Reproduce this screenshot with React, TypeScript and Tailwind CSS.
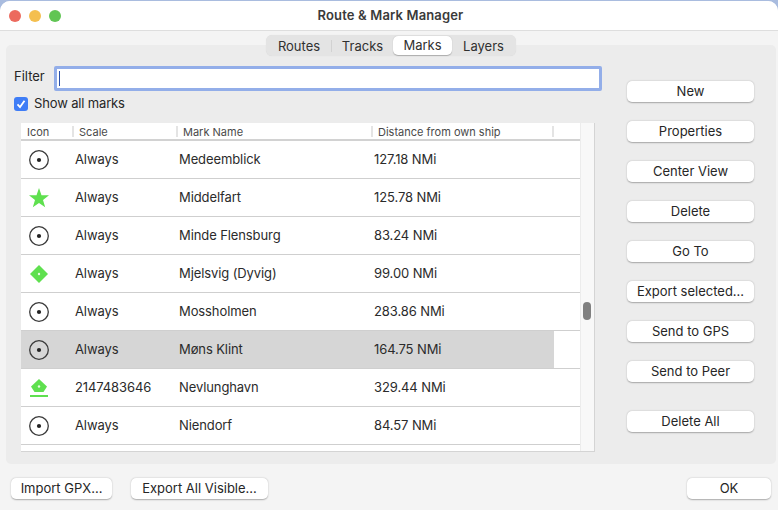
const marks = [
  { icon: "circle", scale: "Always", name: "Medeemblick", distance: "127.18 NMi" },
  { icon: "star", scale: "Always", name: "Middelfart", distance: "125.78 NMi" },
  { icon: "circle", scale: "Always", name: "Minde Flensburg", distance: "83.24 NMi" },
  { icon: "diamond", scale: "Always", name: "Mjelsvig (Dyvig)", distance: "99.00 NMi" },
  { icon: "circle", scale: "Always", name: "Mossholmen", distance: "283.86 NMi" },
  { icon: "circle", scale: "Always", name: "Møns Klint", distance: "164.75 NMi", selected: true },
  { icon: "house", scale: "2147483646", name: "Nevlunghavn", distance: "329.44 NMi" },
  { icon: "circle", scale: "Always", name: "Niendorf", distance: "84.57 NMi" },
];

const sideButtons = [
  { label: "New", className: "mb-[19px]" },
  { label: "Properties", className: "mb-[19px]" },
  { label: "Center View", className: "mb-[19px]" },
  { label: "Delete", className: "mb-[19px]" },
  { label: "Go To", className: "mb-[19px]" },
  { label: "Export selected...", className: "mb-[19px]" },
  { label: "Send to GPS", className: "mb-[19px]" },
  { label: "Send to Peer", className: "mb-[29px]" },
  { label: "Delete All", className: "" },
];

function MarkIcon({ type }: { type: string }) {
  if (type === "star") {
    return (
      <svg width="22" height="22" viewBox="0 0 22 22">
        <path d="M11 1 L13.5 8.2 L21 8.3 L15 12.9 L17.2 20.3 L11 15.9 L4.8 20.3 L7 12.9 L1 8.3 L8.5 8.2 Z" fill="#5fe04f" />
      </svg>
    );
  }
  if (type === "diamond") {
    return (
      <svg width="22" height="22" viewBox="0 0 22 22">
        <path d="M11 2 L20 11 L11 20 L2 11 Z" fill="#5fe04f" />
        <circle cx="11" cy="11" r="1.2" fill="#e8fbe4" />
      </svg>
    );
  }
  if (type === "house") {
    return (
      <svg width="22" height="22" viewBox="0 0 22 22">
        <path d="M11 2 L19 9.5 L15.5 15 L6.5 15 L3 9.5 Z" fill="#5fe04f" />
        <circle cx="11" cy="9.5" r="1.2" fill="#e8fbe4" />
        <rect x="2" y="18" width="18" height="2" fill="#5fe04f" />
      </svg>
    );
  }
  return (
    <svg width="22" height="22" viewBox="0 0 22 22">
      <circle cx="11" cy="11" r="9.3" fill="none" stroke="#3a3a3a" strokeWidth="1.3" />
      <circle cx="11" cy="11" r="2.1" fill="#222222" />
    </svg>
  );
}

function Button({ label, className }: { label: string; className: string }) {
  return (
    <button className={`h-[21px] bg-white rounded-[5px] shadow-[0_0.5px_1.5px_rgba(0,0,0,0.3)] text-[13px] leading-[21px] text-[#262626] ${className}`}>
      {label}
    </button>
  );
}

function HeaderCell({ label, className }: { label: string; className: string }) {
  return (
    <div className={`${className} flex items-center h-[11px] pl-[5px] pt-[2px] border-r-2 border-[#e4e4e4] text-[11px] text-[#4a4a4a]`}>
      {label}
    </div>
  );
}

export default function App() {
  return (
    <div className="w-[778px] h-[510px] overflow-hidden bg-[#a9bcdf] font-['Inter','Liberation_Sans',sans-serif]">
      <div className="w-[778px] h-[510px] mt-px rounded-t-[10px] bg-[#f4f4f4] flex flex-col overflow-hidden">
        {/* title bar */}
        <div className="h-[30px] shrink-0 bg-white border-b border-[#dedede] flex items-center pl-[9px] relative">
          <div className="flex gap-2">
            <div className="w-3 h-3 rounded-full bg-[#ec6a5e]" />
            <div className="w-3 h-3 rounded-full bg-[#f4bf4f]" />
            <div className="w-3 h-3 rounded-full bg-[#61c554]" />
          </div>
          <div className="absolute inset-0 pl-[3px] flex items-center justify-center text-[13px] font-semibold text-[#3a3a3a] tracking-[0.15px]">
            Route &amp; Mark Manager
          </div>
        </div>

        {/* tabbed panel */}
        <div className="relative mt-[14px] mx-[6px] mr-[2px] h-[419px] bg-[#ececec] rounded-[5px] flex pl-[8px] pt-[21px]">
          <div className="absolute -top-[10px] left-[260px] h-[21px] bg-[#e4e4e4] rounded-[6px] flex items-center px-px text-[13px] text-[#303030] shadow-[0_0_1px_rgba(0,0,0,0.1)]">
            <div className="w-[65px] text-center border-r border-[#d2d2d2] leading-[12px]">Routes</div>
            <div className="w-[61px] text-center leading-[12px]">Tracks</div>
            <div className="w-[59px] h-[19px] text-center bg-white rounded-[5px] leading-[19px] shadow-[0_0.5px_1px_rgba(0,0,0,0.25)]">Marks</div>
            <div className="w-[63px] text-center leading-[12px]">Layers</div>
          </div>

          <div className="w-[588px] flex flex-col shrink-0">
            <div className="flex items-start h-[25px]">
              <span className="w-[40px] mt-[1px] text-[13px] text-[#262626]">Filter</span>
              <div className="w-[548px] h-[25px] bg-white border-[3px] border-[#93aee9] rounded-[2px] flex items-center pl-[2px]">
                <div className="w-px h-[15px] bg-[#2a4fa8]" />
              </div>
            </div>
            <label className="flex items-center mt-[6px] h-[14px] text-[13px] text-[#262626] tracking-[-0.15px]">
              <span className="w-[14px] h-[14px] rounded-[3px] bg-[#3f7df6] flex items-center justify-center mr-[6px]">
                <svg width="10" height="10" viewBox="0 0 10 10">
                  <path d="M1.5 5.3 L4 8 L8.5 1.8" fill="none" stroke="white" strokeWidth="1.8" />
                </svg>
              </span>
              Show all marks
            </label>

            {/* marks list */}
            <div className="ml-[7px] mt-[12px] w-[574px] h-[329px] bg-white border-b border-r border-[#d4d4d4] flex overflow-hidden relative">
              <div className="w-[559px] shrink-0">
                <div className="h-[18px] border-b-2 border-[#d2d2d2] flex items-center pl-px">
                  <HeaderCell label="Icon" className="w-[52px]" />
                  <HeaderCell label="Scale" className="w-[104px]" />
                  <HeaderCell label="Mark Name" className="w-[195px]" />
                  <HeaderCell label="Distance from own ship" className="w-[181px]" />
                </div>
                {marks.map((mark) => (
                  <div key={mark.name} className="h-[38px] border-b border-[#cfcfcf] flex text-[13px] text-[#2b2b2b] tracking-[-0.1px]">
                    <div className={`w-[533px] flex items-center ${mark.selected ? "bg-[#d6d6d6]" : ""}`}>
                      <div className="w-[54px] pl-[7px]"><MarkIcon type={mark.icon} /></div>
                      <div className="w-[104px]">{mark.scale}</div>
                      <div className="w-[195px]">{mark.name}</div>
                      <div>{mark.distance}</div>
                    </div>
                  </div>
                ))}
              </div>
              <div className="flex-1 bg-[#f8f8f8] border-l border-[#ececec]" />
              <div className="absolute top-[179px] left-[562px] w-2 h-[18px] rounded-full bg-[#808080]" />
            </div>
          </div>

          <div className="ml-[25px] mt-[15px] w-[127px] flex flex-col">
            {sideButtons.map((b) => (
              <Button key={b.label} label={b.label} className={b.className} />
            ))}
          </div>
        </div>

        {/* bottom buttons */}
        <div className="flex mt-[14px] pl-[11px] pr-[7px]">
          <Button label="Import GPX..." className="w-[101px]" />
          <Button label="Export All Visible..." className="w-[137px] ml-[19px]" />
          <Button label="OK" className="w-[84px] ml-auto" />
        </div>
      </div>
    </div>
  );
}
